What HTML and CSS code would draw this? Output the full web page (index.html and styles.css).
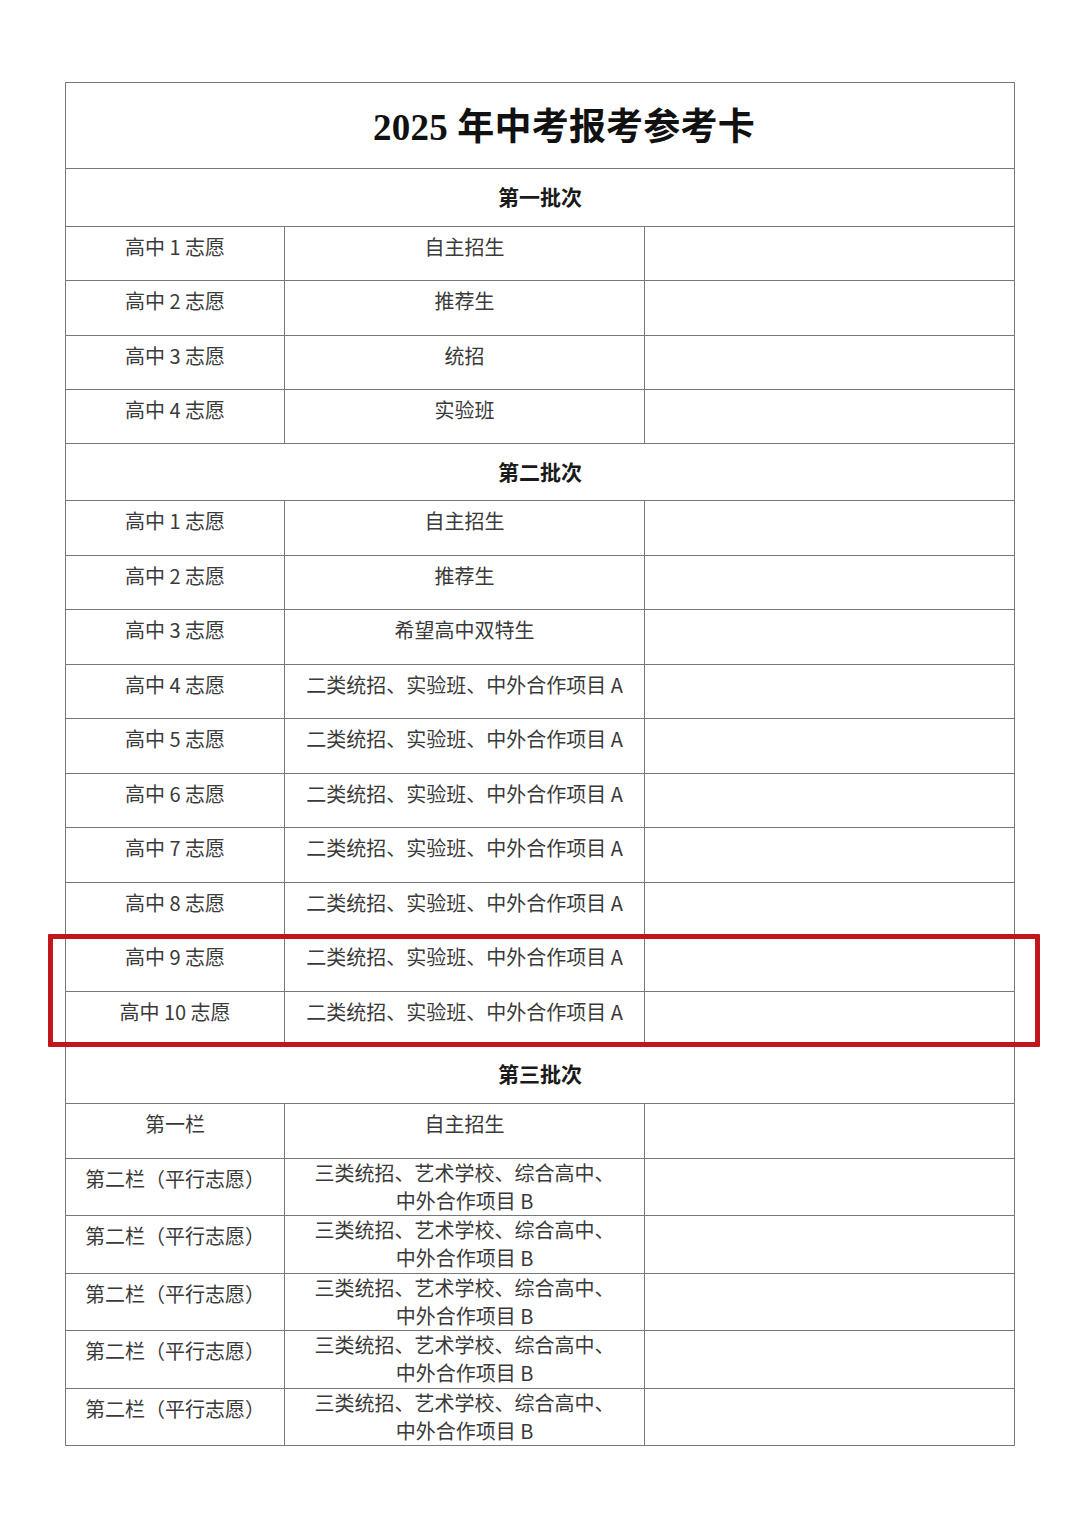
FILE: index.html
```html
<!DOCTYPE html>
<html lang="zh-CN">
<head>
<meta charset="utf-8">
<title>2025 年中考报考参考卡</title>
<link rel="stylesheet" href="styles.css">
</head>
<body>
<div class="card">
  <div class="title">2025 年中考报考参考卡</div>

  <div class="batch b1">第一批次</div>
  <div class="row r1"><div class="c1">高中 1 志愿</div><div class="c2">自主招生</div><div class="c3"></div></div>
  <div class="row r1"><div class="c1">高中 2 志愿</div><div class="c2">推荐生</div><div class="c3"></div></div>
  <div class="row r1"><div class="c1">高中 3 志愿</div><div class="c2">统招</div><div class="c3"></div></div>
  <div class="row r1"><div class="c1">高中 4 志愿</div><div class="c2">实验班</div><div class="c3"></div></div>

  <div class="batch b2">第二批次</div>
  <div class="row r2"><div class="c1">高中 1 志愿</div><div class="c2">自主招生</div><div class="c3"></div></div>
  <div class="row r2"><div class="c1">高中 2 志愿</div><div class="c2">推荐生</div><div class="c3"></div></div>
  <div class="row r2"><div class="c1">高中 3 志愿</div><div class="c2">希望高中双特生</div><div class="c3"></div></div>
  <div class="row r2"><div class="c1">高中 4 志愿</div><div class="c2">二类统招、实验班、中外合作项目 A</div><div class="c3"></div></div>
  <div class="row r2"><div class="c1">高中 5 志愿</div><div class="c2">二类统招、实验班、中外合作项目 A</div><div class="c3"></div></div>
  <div class="row r2"><div class="c1">高中 6 志愿</div><div class="c2">二类统招、实验班、中外合作项目 A</div><div class="c3"></div></div>
  <div class="row r2"><div class="c1">高中 7 志愿</div><div class="c2">二类统招、实验班、中外合作项目 A</div><div class="c3"></div></div>
  <div class="row r2"><div class="c1">高中 8 志愿</div><div class="c2">二类统招、实验班、中外合作项目 A</div><div class="c3"></div></div>
  <div class="row r2"><div class="c1">高中 9 志愿</div><div class="c2">二类统招、实验班、中外合作项目 A</div><div class="c3"></div></div>
  <div class="row r2"><div class="c1">高中 10 志愿</div><div class="c2">二类统招、实验班、中外合作项目 A</div><div class="c3"></div></div>

  <div class="batch b3">第三批次</div>
  <div class="row r3"><div class="c1">第一栏</div><div class="c2">自主招生</div><div class="c3"></div></div>
  <div class="row r4"><div class="c1">第二栏（平行志愿）</div><div class="c2 two">三类统招、艺术学校、综合高中、<br>中外合作项目 B</div><div class="c3"></div></div>
  <div class="row r4"><div class="c1">第二栏（平行志愿）</div><div class="c2 two">三类统招、艺术学校、综合高中、<br>中外合作项目 B</div><div class="c3"></div></div>
  <div class="row r4"><div class="c1">第二栏（平行志愿）</div><div class="c2 two">三类统招、艺术学校、综合高中、<br>中外合作项目 B</div><div class="c3"></div></div>
  <div class="row r4"><div class="c1">第二栏（平行志愿）</div><div class="c2 two">三类统招、艺术学校、综合高中、<br>中外合作项目 B</div><div class="c3"></div></div>
  <div class="row r4 last"><div class="c1">第二栏（平行志愿）</div><div class="c2 two">三类统招、艺术学校、综合高中、<br>中外合作项目 B</div><div class="c3"></div></div>

  <div class="highlight"></div>
</div>
</body>
</html>
```

FILE: styles.css
```css
html, body {
  margin: 0;
  padding: 0;
  background: #ffffff;
}

body {
  font-family: "Noto Sans CJK SC", "Noto Sans", sans-serif;
  color: #3a3a3a;
}

.card {
  position: relative;
  box-sizing: border-box;
  width: 950px;
  margin: 82px 0 0 65px;
  border: 1px solid #777777;
  border-bottom: none;
}

.title {
  box-sizing: border-box;
  height: 86px;
  border-bottom: 1px solid #777777;
  display: flex;
  align-items: center;
  justify-content: center;
  padding-left: 48px;
  padding-bottom: 4px;
  font-family: "Liberation Serif", "Noto Sans CJK SC", serif;
  font-weight: 700;
  font-size: 37px;
  color: #111111;
  letter-spacing: 0.2px;
}

.batch {
  box-sizing: border-box;
  border-bottom: 1px solid #777777;
  display: flex;
  align-items: center;
  justify-content: center;
  padding-bottom: 3px;
  font-weight: 700;
  font-size: 21px;
  color: #1a1a1a;
}

.b1 { height: 58px; }
.b2 { height: 57px; }
.b3 { height: 58px; }

.row {
  box-sizing: border-box;
  display: grid;
  grid-template-columns: 219px 360px 1fr;
  border-bottom: 1px solid #777777;
  font-size: 20px;
  line-height: 28px;
}

.r1 { height: 54.25px; }
.r2 { height: 54.5px; }
.r3 { height: 55px; }
.r4 { height: 57.4px; }

.c1, .c2 {
  box-sizing: border-box;
  border-right: 1px solid #777777;
  text-align: center;
  padding-top: 6px;
  white-space: nowrap;
}

.c2.two {
  padding-top: 0;
}

.c3 {
  box-sizing: border-box;
}

.highlight {
  position: absolute;
  left: -18px;
  top: 851px;
  width: 992px;
  height: 113px;
  box-sizing: border-box;
  border: 5px solid #c0161c;
  border-radius: 1px;
  pointer-events: none;
}
```
